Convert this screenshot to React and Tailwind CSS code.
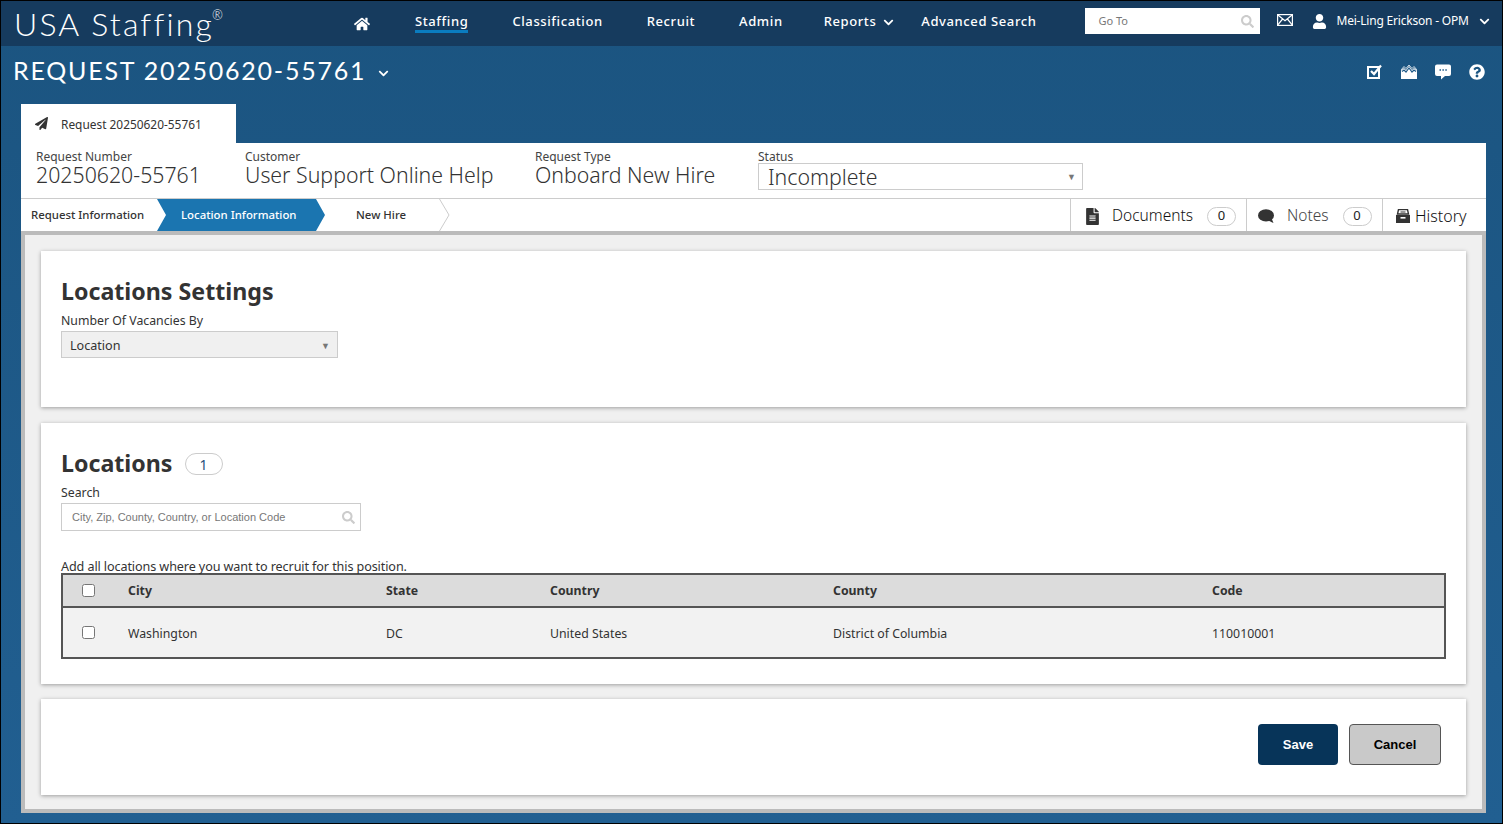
import { FaHome, FaSearch, FaUser, FaChevronDown, FaPaperPlane, FaQuestionCircle, FaFileAlt } from "react-icons/fa";

const ui = "font-['Noto_Sans',sans-serif]";

function Envelope() {
    return (
        <svg width="16" height="12" viewBox="0 0 16 12" fill="none" stroke="white" strokeWidth="1.2">
            <rect x="0.6" y="0.6" width="14.8" height="10.8" />
            <path d="M0.6 0.8 L8 6.8 L15.4 0.8 M0.6 11.2 L5.6 5 M15.4 11.2 L10.4 5" />
        </svg>
    );
}

function CheckBox() {
    return (
        <svg width="16" height="15" viewBox="0 0 16 15" fill="none" stroke="white">
            <rect x="1" y="3" width="11" height="11" strokeWidth="2" />
            <path d="M4 7 L7 10 L14 1.5" strokeWidth="2.2" />
        </svg>
    );
}

function OpenMail() {
    return (
        <svg width="16" height="14" viewBox="0 0 16 14" fill="white">
            <path d="M0 5.5 L3 3 L5 5 L8 1 L11 5 L13 3 L16 5.5 V14 H0 Z" />
            <path d="M0 5 L3 1.5 L5 3.5 L8 0 L11 3.5 L13 1.5 L16 5" fill="none" stroke="white" strokeWidth="0.8" />
            <path d="M1 6.5 L3 5 L5 7 L8 3 L11 7 L13 5 L15 6.5" fill="none" stroke="#1f5a88" strokeWidth="1.2" />
        </svg>
    );
}

function ChatDots() {
    return (
        <svg width="16" height="16" viewBox="0 0 16 16" className="mt-[1px]">
            <path d="M2 0.5 H14 Q16 0.5 16 2.5 V10 Q16 12 14 12 H10 L6 15.5 V12 H2 Q0 12 0 10 V2.5 Q0 0.5 2 0.5 Z" fill="white" />
            <path d="M4.5 6 H6 M7.4 6 H8.9 M10.3 6 H11.8" stroke="#1f5a88" strokeWidth="1.6" />
        </svg>
    );
}

function Bubble() {
    return (
        <svg width="16" height="14" viewBox="0 0 16 14" fill="#333">
            <ellipse cx="8" cy="6.4" rx="8" ry="6.2" />
            <path d="M9 11 L15.5 14 L13 8 Z" />
        </svg>
    );
}

function ArchiveBox() {
    return (
        <svg width="14" height="14" viewBox="0 0 14 14">
            <path d="M2.5 0.5 H11.5 L12.5 5 H1.5 Z" fill="none" stroke="#333" strokeWidth="1.4" />
            <path d="M0 6 H14 V14 H0 Z" fill="#333" />
            <path d="M4.5 3 H9.5" stroke="#333" />
            <rect x="4.5" y="8" width="5" height="1.6" fill="white" />
        </svg>
    );
}

function NavItem({ children, active }) {
    return (
        <a className={`text-[13px] leading-[18px] font-medium tracking-[0.6px] text-white ${active ? "mt-[3px] border-b-[3px] border-[#0a7cbf]" : ""}`}>
            {children}
        </a>
    );
}

function Field({ label, value, className }) {
    return (
        <div className={className}>
            <div className="text-[12px] leading-[13px] text-[#444]">{label}</div>
            <div className="text-[21.3px] leading-[24px] font-light text-[#333]">{value}</div>
        </div>
    );
}

function Pill({ children, className }) {
    return (
        <span className={`flex h-[19px] w-[29px] items-center justify-center rounded-full border border-[#ccc] bg-white text-[13px] text-[#222] ${className}`}>
            {children}
        </span>
    );
}

function Card({ className, children }) {
    return <section className={`bg-white shadow-[0_1px_4px_rgba(0,0,0,0.35)] ${className}`}>{children}</section>;
}

export default function App() {
    return (
        <div className={`flex h-[824px] flex-col overflow-hidden border border-black bg-gradient-to-b from-[#1b5480] to-[#215f91] ${ui}`}>
            {/* Top nav */}
            <header className="flex h-[45px] shrink-0 items-center bg-[#163b5e] pb-[5px] text-white">
                <div className="mt-[5px] ml-[13px] flex w-[341px] items-start font-['Lato',sans-serif] text-[32px] leading-[40px] font-light tracking-[2.15px]">
                    USA Staffing
                    <span className="mt-[-1px] ml-[-2px] text-[13px] leading-[24px]">®</span>
                </div>
                <FaHome className="mt-[5px] ml-[-1px] text-[16px]" />
                <nav className="ml-[45px] flex items-center gap-[44px]">
                    <NavItem active>Staffing</NavItem>
                    <NavItem>Classification</NavItem>
                    <NavItem>Recruit</NavItem>
                    <NavItem>Admin</NavItem>
                    <div className="ml-[-3px] flex items-center gap-[7px]">
                        <NavItem>Reports</NavItem>
                        <FaChevronDown className="mt-[2px] text-[11px]" />
                    </div>
                </nav>
                <div className="ml-[27px] flex">
                    <NavItem>Advanced Search</NavItem>
                </div>
                <div className="ml-[49px] flex h-[26px] w-[175px] items-center justify-between bg-white pr-[6px] pl-[13px] text-[11px] text-[#777]">
                    Go To
                    <FaSearch className="text-[13px] text-[#ccc]" />
                </div>
                <div className="mb-[2px] ml-[17px]"><Envelope /></div>
                <FaUser className="ml-[19px] text-[15px]" />
                <span className="ml-[9px] text-[12px] tracking-[-0.2px]">Mei-Ling Erickson - OPM</span>
                <FaChevronDown className="ml-[10px] text-[11px]" />
            </header>

            {/* Request title */}
            <div className="flex h-[58px] shrink-0 items-start justify-between pt-[6px] pr-[17px] pl-[12px] text-white">
                <div className="flex items-center gap-[12px]">
                    <h1 className="font-['Lato',sans-serif] text-[25px] leading-[37px] font-normal tracking-[1.77px]">REQUEST 20250620-55761</h1>
                    <FaChevronDown className="mt-[5px] text-[11px]" />
                </div>
                <div className="mt-[11px] flex items-center gap-[18px]">
                    <CheckBox />
                    <OpenMail />
                    <ChatDots />
                    <FaQuestionCircle className="text-[16px]" />
                </div>
            </div>

            {/* Tab */}
            <div className="ml-[20px] flex h-[39px] w-[215px] shrink-0 items-center bg-white pl-[14px] text-[#333]">
                <FaPaperPlane className="text-[13px]" />
                <span className="mt-[2px] ml-[13px] text-[11.9px]">Request 20250620-55761</span>
            </div>

            {/* Work area */}
            <main className="mr-[16px] ml-[20px] bg-white">
                <div className="flex h-[55px] items-start pt-[7px] pl-[15px]">
                    <Field label="Request Number" value="20250620-55761" className="w-[209px]" />
                    <Field label="Customer" value="User Support Online Help" className="w-[290px]" />
                    <Field label="Request Type" value="Onboard New Hire" className="w-[223px]" />
                    <div>
                        <div className="text-[12px] leading-[13px] text-[#444]">Status</div>
                        <div className="flex h-[27px] w-[325px] items-center justify-between border border-[#ccc] pr-[6px] pl-[9px] text-[21.3px] font-light text-[#333]">
                            Incomplete
                            <span className="text-[9px] text-[#777]">▼</span>
                        </div>
                    </div>
                </div>

                {/* Steps and side tabs */}
                <div className="flex h-[33px] items-stretch border-t border-[#ccc] text-[#333]">
                    <div className="flex w-[136px] items-center pl-[10px] text-[11.4px] font-medium">Request Information</div>
                    <div className="flex w-[168px] items-center bg-[#1b75b0] pl-[24px] text-[11.4px] font-medium text-white [clip-path:polygon(0_0,calc(100%-9px)_0,100%_50%,calc(100%-9px)_100%,0_100%,9px_50%)]">
                        Location Information
                    </div>
                    <div className="ml-[31px] flex w-[94px] items-center justify-between text-[11.4px] font-medium">
                        New Hire
                        <svg width="11" height="32" viewBox="0 0 11 32" fill="none" stroke="#ccc">
                            <path d="M0.5 0 L10 16 L0.5 32" />
                        </svg>
                    </div>
                    <div className="ml-auto flex">
                        <div className="flex w-[177px] items-center border-x border-[#ccc] pt-[2px] pl-[13px]">
                            <FaFileAlt className="text-[17px] text-[#333]" />
                            <span className="ml-[11px] text-[15.5px] font-light text-[#111]">Documents</span>
                            <Pill className="ml-[14px]">0</Pill>
                        </div>
                        <div className="flex w-[136px] items-center border-r border-[#ccc] pt-[2px] pl-[11px]">
                            <Bubble />
                            <span className="ml-[13px] text-[15.5px] font-light text-[#444]">Notes</span>
                            <Pill className="ml-[14px]">0</Pill>
                        </div>
                        <div className="flex w-[103px] items-center pt-[2px] pl-[13px]">
                            <ArchiveBox />
                            <span className="ml-[5px] text-[16px] font-light text-[#111]">History</span>
                        </div>
                    </div>
                </div>

                <div className="flex h-[582px] flex-col gap-[16px] border-[4px] border-[#bbb] bg-[#f0f0f0] px-[16px] pt-[16px] text-[#333]">
                    <Card className="h-[156px] px-[20px] pt-[25px]">
                        <h2 className="text-[23.2px] leading-[30px] font-bold">Locations Settings</h2>
                        <label className="mt-[6px] block text-[12.3px] leading-[18px]">Number Of Vacancies By</label>
                        <div className="mt-[1px] flex h-[27px] w-[277px] items-center justify-between border border-[#ccc] bg-[#f0f0f0] pt-[3px] pr-[7px] pl-[8px] text-[12.6px]">
                            Location
                            <span className="text-[9px] text-[#777]">▼</span>
                        </div>
                    </Card>

                    <Card className="h-[261px] px-[20px] pt-[25px]">
                        <div className="flex items-center gap-[12px]">
                            <h2 className="text-[23.2px] leading-[30px] font-bold">Locations</h2>
                            <span className="mt-[2px] flex h-[22px] w-[38px] items-center justify-center rounded-full border border-[#ccc] text-[14px] text-[#1f4f7a]">1</span>
                        </div>
                        <label className="mt-[6px] block text-[12.3px] leading-[18px]">Search</label>
                        <div className="mt-[1px] flex h-[28px] w-[300px] items-center justify-between border border-[#ccc] pr-[5px] pl-[10px] font-['Liberation_Sans',sans-serif] text-[11px] text-[#777]">
                            City, Zip, County, Country, or Location Code
                            <FaSearch className="text-[13px] text-[#ccc]" />
                        </div>
                        <p className="mt-[28px] h-[14px] text-[12.6px] leading-[16px] tracking-[-0.1px] text-[#333]">Add all locations where you want to recruit for this position.</p>
                        <table className="w-[1385px] table-fixed border-2 border-[#555] text-[12.3px]">
                            <thead>
                                <tr className="h-[33px] border-b-2 border-[#555] bg-[#dcdcdc] text-left font-bold [&>th:not(:first-child)]:pt-[2px]">
                                    <th className="w-[66px] pl-[19px]"><input type="checkbox" className="block h-[13px] w-[13px]" /></th>
                                    <th className="w-[258px]">City</th>
                                    <th className="w-[164px]">State</th>
                                    <th className="w-[283px]">Country</th>
                                    <th className="w-[379px]">County</th>
                                    <th>Code</th>
                                </tr>
                            </thead>
                            <tbody>
                                <tr className="h-[51px] bg-[#f2f2f2] [&>td:not(:first-child)]:pt-[3px]">
                                    <td className="pl-[19px]"><input type="checkbox" className="block h-[13px] w-[13px]" /></td>
                                    <td>Washington</td>
                                    <td>DC</td>
                                    <td>United States</td>
                                    <td>District of Columbia</td>
                                    <td>110010001</td>
                                </tr>
                            </tbody>
                        </table>
                    </Card>

                    <Card className="mt-[-1px] flex h-[96px] items-center justify-end gap-[11px] pr-[25px] pb-[6px]">
                        <button className="h-[41px] w-[80px] rounded-[4px] bg-[#073459] pt-[1px] font-['Liberation_Sans',sans-serif] text-[13px] font-bold text-white">Save</button>
                        <button className="h-[41px] w-[92px] rounded-[4px] border border-[#555] bg-[#c9c9c9] pt-[1px] font-['Liberation_Sans',sans-serif] text-[13px] font-bold text-black">Cancel</button>
                    </Card>
                </div>
            </main>
        </div>
    );
}
